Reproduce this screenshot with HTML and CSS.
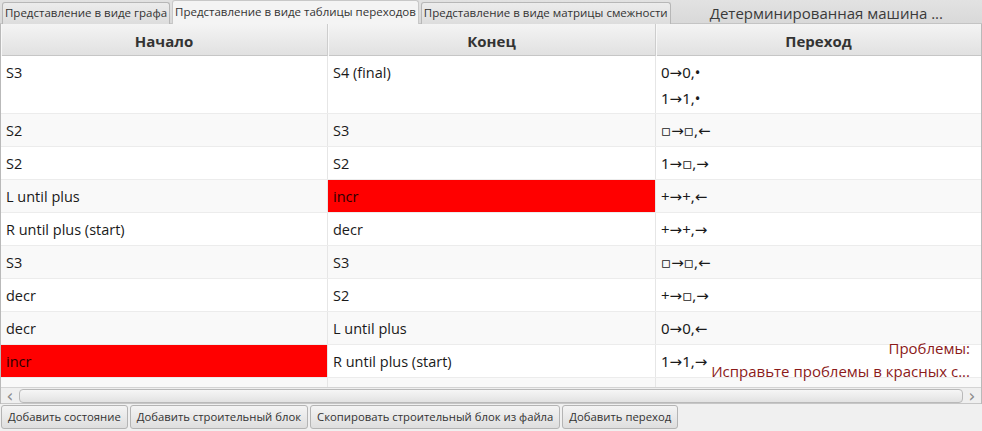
FILE: index.html
```html
<!DOCTYPE html>
<html lang="ru">
<head>
<meta charset="utf-8">
<title>Машина</title>
<link rel="stylesheet" href="styles.css">
</head>
<body>
<div class="window">
  <div class="tabbar">
    <div class="tab">Представление в виде графа</div>
    <div class="tab selected">Представление в виде таблицы переходов</div>
    <div class="tab">Представление в виде матрицы смежности</div>
    <div class="title">Детерминированная машина ...</div>
  </div>
  <div class="table">
    <div class="thead">
      <div class="th">Начало</div>
      <div class="th">Конец</div>
      <div class="th">Переход</div>
    </div>
    <div class="tbody">
      <div class="row tall">
        <div class="cell">S3</div>
        <div class="cell">S4 (final)</div>
        <div class="cell trans"><div>0→0,•</div><div>1→1,•</div></div>
      </div>
      <div class="row alt">
        <div class="cell">S2</div>
        <div class="cell">S3</div>
        <div class="cell trans">▫→▫,←</div>
      </div>
      <div class="row">
        <div class="cell">S2</div>
        <div class="cell">S2</div>
        <div class="cell trans">1→▫,→</div>
      </div>
      <div class="row alt">
        <div class="cell">L until plus</div>
        <div class="cell error">incr</div>
        <div class="cell trans">+→+,←</div>
      </div>
      <div class="row">
        <div class="cell">R until plus (start)</div>
        <div class="cell">decr</div>
        <div class="cell trans">+→+,→</div>
      </div>
      <div class="row alt">
        <div class="cell">S3</div>
        <div class="cell">S3</div>
        <div class="cell trans">▫→▫,←</div>
      </div>
      <div class="row">
        <div class="cell">decr</div>
        <div class="cell">S2</div>
        <div class="cell trans">+→▫,→</div>
      </div>
      <div class="row alt">
        <div class="cell">decr</div>
        <div class="cell">L until plus</div>
        <div class="cell trans">0→0,←</div>
      </div>
      <div class="row">
        <div class="cell error">incr</div>
        <div class="cell">R until plus (start)</div>
        <div class="cell trans">1→1,→</div>
      </div>
      <div class="row alt partial">
        <div class="cell"></div>
        <div class="cell"></div>
        <div class="cell"></div>
      </div>
    </div>
    <div class="problems">
      <div>Проблемы:</div>
      <div>Исправьте проблемы в красных с...</div>
    </div>
    <div class="hscroll">
      <span class="arrow">&lsaquo;</span>
      <div class="thumb"></div>
      <span class="arrow">&rsaquo;</span>
    </div>
  </div>
  <div class="buttons">
    <div class="btn">Добавить состояние</div>
    <div class="btn">Добавить строительный блок</div>
    <div class="btn">Скопировать строительный блок из файла</div>
    <div class="btn">Добавить переход</div>
  </div>
</div>
</body>
</html>
```
FILE: styles.css
```css
html, body {
  margin: 0;
  padding: 0;
}
body {
  width: 982px;
  height: 431px;
  overflow: hidden;
  background: #f2f2f2;
  font-family: "Open Sans", "Noto Sans", sans-serif;
  color: #222;
}
.window {
  display: flex;
  flex-direction: column;
  height: 431px;
}
.tabbar {
  height: 24px;
  display: flex;
  align-items: flex-end;
  gap: 2px;
  padding-left: 2px;
  background: linear-gradient(#e2e2e2, #d9d9d9);
  border-bottom: 1px solid #c4c4c4;
  box-sizing: border-box;
}
.tab {
  height: 22px;
  box-sizing: border-box;
  padding: 0 2px;
  font-size: 11.5px;
  line-height: 20px;
  color: #333;
  border: 1px solid #b7b7b7;
  border-bottom: none;
  border-radius: 3px 3px 0 0;
  background: linear-gradient(#ececec, #dddddd);
  margin-bottom: -1px;
  white-space: nowrap;
}
.tab.selected {
  height: 24px;
  line-height: 22px;
  background: #f4f4f4;
  border-color: #c8c8c8;
}
.title {
  flex: 1;
  text-align: center;
  font-size: 15px;
  line-height: 20px;
  color: #3a3a3a;
  white-space: nowrap;
  padding-right: 2px;
}
.table {
  position: relative;
  flex: 1;
  display: flex;
  flex-direction: column;
  border-left: 1px solid #b9b9b9;
  border-right: 1px solid #b9b9b9;
  background: #fff;
  overflow: hidden;
}
.thead {
  display: grid;
  grid-template-columns: 327px 328px 1fr;
  height: 32px;
  box-sizing: border-box;
  border-bottom: 1px solid #c6c6c6;
  background: linear-gradient(#f4f4f4, #e1e1e1);
}
.th {
  text-align: center;
  font-weight: bold;
  font-size: 15px;
  line-height: 34px;
  color: #333;
  border-right: 1px solid #cdcdcd;
  box-shadow: inset 1px 0 0 #f8f8f8;
}
.th:last-child {
  border-right: none;
}
.tbody {
  flex: 1;
  display: flex;
  flex-direction: column;
}
.row {
  display: grid;
  grid-template-columns: 327px 328px 1fr;
  height: 33px;
  box-sizing: border-box;
  border-bottom: 1px solid #ececec;
  background: #fff;
}
.row.alt {
  background: #f9f9f9;
}
.row.tall {
  height: 58px;
}
.row.partial {
  height: 9px;
  border-bottom: none;
}
.cell {
  padding: 4px 5px 0;
  font-size: 14.5px;
  line-height: 26px;
  border-right: 1px solid #e6e6e6;
  white-space: nowrap;
  overflow: hidden;
  color: #1a1a1a;
}
.cell:last-child {
  border-right: none;
}
.cell.trans {
  padding-top: 3px;
  font-size: 15px;
  line-height: 26px;
  font-family: "Noto Sans", "DejaVu Sans", sans-serif;
}
.cell.error {
  background: #ff0000;
  color: #2a0000;
}
.problems {
  position: absolute;
  right: 11px;
  bottom: 21px;
  text-align: right;
  font-size: 15px;
  line-height: 23px;
  color: #8b1a1a;
}
.hscroll {
  height: 17px;
  display: flex;
  align-items: center;
  gap: 3px;
  padding: 0 3px 0 3px;
  background: #efefef;
  border-top: 1px solid #d4d4d4;
  border-bottom: 1px solid #c6c6c6;
}
.arrow {
  width: 12px;
  text-align: center;
  font-size: 17px;
  line-height: 14px;
  color: #8a8a8a;
  font-family: "DejaVu Sans", sans-serif;
}
.thumb {
  flex: 1;
  height: 14px;
  box-sizing: border-box;
  border: 1px solid #b9b9b9;
  border-radius: 4px;
  background: linear-gradient(#f6f6f6, #e2e2e2);
}
.buttons {
  height: 27px;
  display: flex;
  gap: 2px;
  padding: 1px 1px 0;
  box-sizing: border-box;
  background: #f0f0f0;
}
.btn {
  height: 24px;
  box-sizing: border-box;
  padding: 0 6px;
  font-size: 11.3px;
  line-height: 22px;
  color: #333;
  border: 1px solid #b4b4b4;
  border-radius: 3px;
  background: linear-gradient(#f4f4f4, #dedede);
  white-space: nowrap;
}
```
